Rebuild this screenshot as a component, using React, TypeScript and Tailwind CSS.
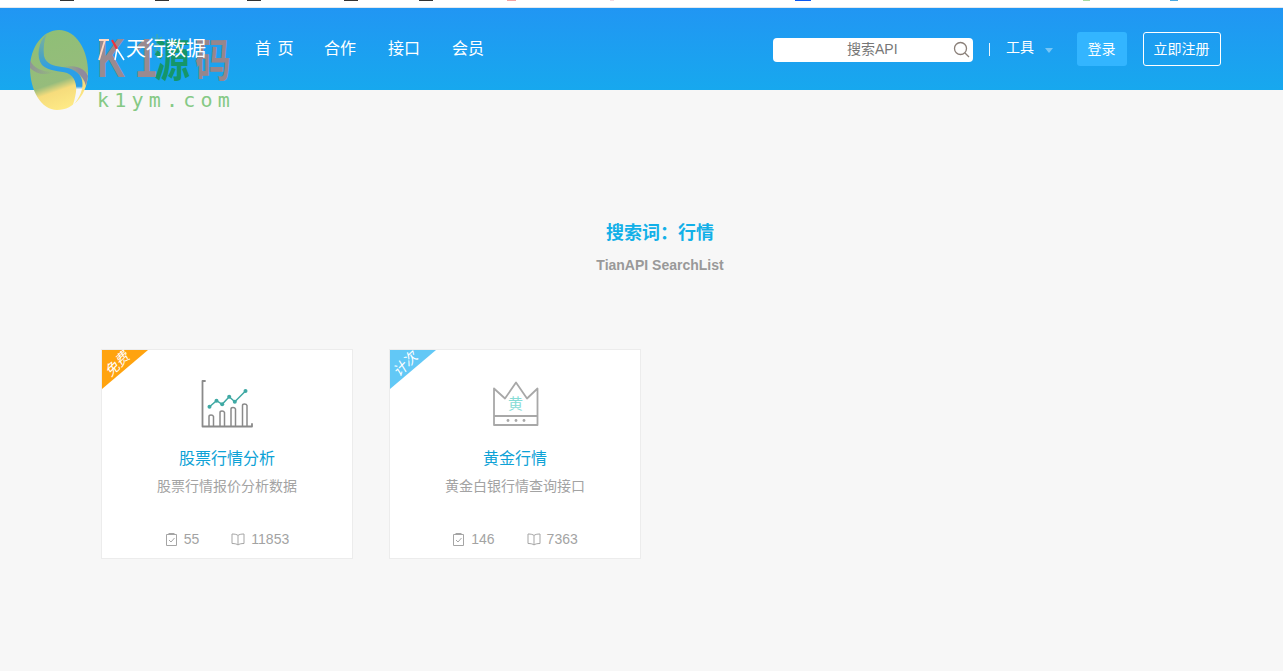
const marks = [
    { width: "w-[14px]", margin: "ml-[60px]", color: "bg-[#333]" },
    { width: "w-[14px]", margin: "ml-[81px]", color: "bg-[#333]" },
    { width: "w-[14px]", margin: "ml-[78px]", color: "bg-[#333]" },
    { width: "w-[14px]", margin: "ml-[83px]", color: "bg-[#333]" },
    { width: "w-[14px]", margin: "ml-[61px]", color: "bg-[#333]" },
    { width: "w-[9px]", margin: "ml-[74px]", color: "bg-[#f5a3a3]" },
    { width: "w-[4px]", margin: "ml-[94px]", color: "bg-[#f7d9e0]" },
    { width: "w-[16px]", margin: "ml-[181px]", color: "bg-[#0b57f0]" },
    { width: "w-[7px]", margin: "ml-[272px]", color: "bg-[#a9d9a0]" },
    { width: "w-[8px]", margin: "ml-[80px]", color: "bg-[#4aa8e0]" },
];

const cards = [
    {
        badge: "免费",
        badgeColor: "bg-[#ffa30f]",
        title: "股票行情分析",
        desc: "股票行情报价分析数据",
        icon: <ChartIcon />,
        calls: "55",
        views: "11853",
    },
    {
        badge: "计次",
        badgeColor: "bg-[#62c8f6]",
        title: "黄金行情",
        desc: "黄金白银行情查询接口",
        icon: <CrownIcon />,
        calls: "146",
        views: "7363",
    },
];

function ChartIcon() {
    return (
        <svg width="52" height="50" viewBox="0 0 52 50" fill="none">
            <path d="M4 2H1.500V47.500H51V45" stroke="#8a8a8a" strokeWidth="1.800" strokeLinecap="round" strokeLinejoin="round" />
            <path d="M8 47V37.500Q8 36 10 36T12.500 37.500V47M19 47V33.500Q19 32 21 32T23.500 33.500V47M30 47V30Q30 28.500 32 28.500T34.500 30V47M41.500 47V26.500Q41.500 25 43.500 25T46 26.500V47" stroke="#8a8a8a" strokeWidth="1.500" />
            <path d="M8.500 27.700L15.500 21.700L21.200 25.300L28.200 17.700L33.800 22.700L44.500 12" stroke="#3fa9a4" strokeWidth="1.500" />
            {[[8.5, 27.7], [15.5, 21.7], [21.2, 25.3], [28.2, 17.7], [33.8, 22.7], [44.5, 12]].map(([cx, cy]) => (
                <circle key={cx} cx={cx} cy={cy} r="2" fill="#3fa9a4" />
            ))}
        </svg>
    );
}

function CrownIcon() {
    return (
        <div className="relative ml-[1px] h-[46px] w-[46px]">
            <svg width="46" height="46" viewBox="0 0 46 46" fill="none">
                <path d="M1 7.500L12 17.500L23 1.500L34 17.500L44.500 7.500V44H1Z" stroke="#a8a8a8" strokeWidth="1.800" strokeLinejoin="round" />
                <path d="M1 35H44.500" stroke="#a8a8a8" strokeWidth="1.800" />
                <circle cx="15" cy="39.500" r="1.400" fill="#a8a8a8" />
                <circle cx="23" cy="39.500" r="1.400" fill="#a8a8a8" />
                <circle cx="31" cy="39.500" r="1.400" fill="#a8a8a8" />
            </svg>
            <span className="absolute left-0 right-0 top-[14px] text-center text-[15px] leading-[18px] text-[#86dcd6]">黄</span>
        </div>
    );
}

function CheckIcon() {
    return (
        <svg width="13" height="13" viewBox="0 0 13 13" fill="none" stroke="#a5a5a5" strokeWidth="1">
            <path d="M1.500 1.500H11.500V12.500H1.500Z" />
            <path d="M3.500 .5H9.500" />
            <path d="M4 7L6 9L9.500 5" />
        </svg>
    );
}

function BookIcon() {
    return (
        <svg width="14" height="13" viewBox="0 0 14 13" fill="none" stroke="#a5a5a5" strokeWidth="1">
            <path d="M7 2.500C6 1.500 4 1 1 1V10.500C4 10.500 6 11 7 12C8 11 10 10.500 13 10.500V1C10 1 8 1.500 7 2.500Z" />
            <path d="M7 2.500V12" />
        </svg>
    );
}

function Watermark() {
    return (
        <div className="pointer-events-none absolute left-[30px] top-[30px] flex gap-[7px]">
            <svg width="60" height="80" viewBox="0 0 60 80">
                <defs>
                    <linearGradient id="egg" x1="0.300" y1="0" x2="0.550" y2="1">
                        <stop offset="0" stopColor="#8fbf76" />
                        <stop offset="0.650" stopColor="#96bc7c" />
                        <stop offset="0.760" stopColor="#f6dc7c" />
                        <stop offset="1" stopColor="#feea86" />
                    </linearGradient>
                    <linearGradient id="sweep" x1="0" y1="0" x2="0" y2="1">
                        <stop offset="0" stopColor="#7fb39a" />
                        <stop offset="0.300" stopColor="#4fa4c0" />
                        <stop offset="0.500" stopColor="#2a9fe8" />
                        <stop offset="0.720" stopColor="#2a9fe8" />
                        <stop offset="0.760" stopColor="#f7f7f7" />
                        <stop offset="1" stopColor="#f7f7f7" />
                    </linearGradient>
                    <linearGradient id="bandLeft" x1="0" y1="0" x2="1" y2="0">
                        <stop offset="0" stopColor="#8f8a9e" stopOpacity="0.800" />
                        <stop offset="1" stopColor="#8f8a9e" stopOpacity="0" />
                    </linearGradient>
                    <linearGradient id="bandRight" x1="0" y1="0" x2="1" y2="0">
                        <stop offset="0" stopColor="#8f8a9e" stopOpacity="0" />
                        <stop offset="0.700" stopColor="#8f8a9e" />
                    </linearGradient>
                </defs>
                <path d="M29 0C46 0 58 20 58 42C58 64 44 80 27 80C11 80 0 60 0 38C0 17 13 0 29 0Z" fill="url(#egg)" />
                <path d="M0 30C3 38 12 42 24 42C16 46 6 44 0 38Z" fill="url(#bandLeft)" />
                <path d="M32 37C42 35 54 36 58 46C57 50 57 52 56 56C53 44 44 39 32 37Z" fill="url(#bandRight)" />
                <path d="M17 3C8 12 6 27 12 35C18 41 30 41 37 43C45 46 47 55 46 62C45 68 44 72 42 77C50 68 54 58 52 50C50 42 42 38 32 37C24 36 16 34 14 26C13 18 14 10 17 3Z" fill="url(#sweep)" />
            </svg>
            <div className="relative flex w-[136px] flex-col">
                <svg width="16" height="26" viewBox="0 0 16 26" fill="none" stroke="#58b96e" strokeWidth="1" opacity="0.700" className="absolute left-[52px] top-[3px]">
                    <path d="M8 1V25M8 8L3 4M8 8L13 4M8 14L2 10M8 14L14 10M8 20L4 16M8 20L12 16" />
                </svg>
                <div className="flex h-[56px] items-start whitespace-nowrap">
                    <span className="w-[38px] origin-left scale-x-[0.7] text-[56px] font-bold leading-[56px] text-[#9a8a90]">K</span>
                    <span className="w-[19px] origin-left scale-x-[0.7] text-[56px] font-bold leading-[56px] text-[#9a8a90]">1</span>
                    <span className="mt-[4px] w-[41px] scale-y-[1.25] text-[36px] font-bold leading-[56px] text-[#15966a]">源</span>
                    <span className="mt-[4px] scale-y-[1.25] text-[36px] font-bold leading-[56px] text-[#96868c]">码</span>
                </div>
                <span className="mt-[5px] whitespace-nowrap font-['DejaVu_Sans_Mono',monospace] text-[20px] leading-[18px] tracking-[5.200px] text-[#85c985]">k1ym.com</span>
            </div>
        </div>
    );
}

export default function App() {
    return (
        <div className="relative min-h-[671px] overflow-hidden bg-[#f7f7f7] font-['Liberation_Sans','Noto_Sans_CJK_SC',sans-serif]">
            <div className="flex h-[8px] items-start border-b border-[#e3e8ee] bg-white">
                {marks.map((mark) => (
                    <div key={mark.margin + mark.width} className={`h-[1px] ${mark.width} ${mark.margin} ${mark.color}`} />
                ))}
            </div>

            <header className="flex h-[82px] items-center bg-gradient-to-b from-[#2196f3] to-[#17a8ee] pl-[97px] pr-[62px] text-white">
                <svg width="28" height="24" viewBox="0 0 28 24" fill="none" className="relative z-10">
                    <path d="M2 3H12M8 3L2 23" stroke="#ffd9c4" strokeWidth="1.800" />
                    <path d="M15 3L20 12" stroke="#f0343c" strokeWidth="2.200" />
                    <path d="M20 12L27 23M20 12L18 23" stroke="#fff" strokeWidth="1.500" />
                </svg>
                <span className="relative z-10 ml-[1px] text-[20px] leading-none">天行数据</span>
                <nav className="ml-[49px] flex gap-[32px] text-[16px]">
                    <span className="w-[37px] whitespace-nowrap tracking-[1px]">首 页</span>
                    <span>合作</span>
                    <span>接口</span>
                    <span>会员</span>
                </nav>
                <div className="ml-auto mt-[2px] flex h-[24px] w-[200px] items-center rounded-[4px] bg-white pl-[74px] pr-[3px] text-[14px] text-[#777]">
                    <span className="mb-[2px]">搜索API</span>
                    <svg width="17" height="17" viewBox="0 0 17 17" fill="none" stroke="#8a7f78" strokeWidth="1.300" className="mb-[1px] ml-auto">
                        <circle cx="7.500" cy="7.500" r="6" />
                        <path d="M12 12L16 16" />
                    </svg>
                </div>
                <div className="ml-[16px] h-[13px] w-[1px] bg-white/90" />
                <span className="mb-[3px] ml-[16px] text-[14px]">工具</span>
                <div className="ml-[11px] mt-[2px] h-0 w-0 border-x-[4px] border-t-[5px] border-x-transparent border-t-white/40" />
                <button className="ml-[24px] h-[34px] w-[50px] rounded-[3px] bg-[#33b5ff] pr-[1px] text-[14px]">登录</button>
                <button className="ml-[16px] h-[34px] w-[78px] rounded-[3px] border border-white pr-[1px] text-[14px]">立即注册</button>
            </header>

            <div className="mt-[130px] flex flex-col items-center pl-[37px]">
                <h1 className="text-[18px] font-bold leading-[26px] text-[#12b0e8]">搜索词：行情</h1>
                <p className="mt-[10px] text-[14px] font-bold leading-[18px] text-[#999]">TianAPI SearchList</p>
            </div>

            <div className="mt-[75px] flex gap-[36px] pl-[101px]">
                {cards.map((card) => (
                    <article key={card.title} className="relative flex h-[210px] w-[252px] flex-col items-center border border-[#ececec] bg-white pt-[29px]">
                        <div className={`absolute left-0 top-0 h-[39px] w-[46px] [clip-path:polygon(0_0,100%_0,0_100%)] ${card.badgeColor}`} />
                        <span className="absolute left-[0px] top-[6px] w-[30px] -rotate-45 text-center text-[14px] italic leading-[16px] text-white">{card.badge}</span>
                        <div className="flex h-[50px] items-center">{card.icon}</div>
                        <h2 className="mt-[18px] text-[16px] leading-[24px] text-[#0ea2d6]">{card.title}</h2>
                        <p className="mt-[3px] text-[14px] leading-[24px] text-[#a3a3a3]">{card.desc}</p>
                        <div className="mt-[31px] flex items-center gap-[32px] text-[14px] leading-[20px] text-[#a3a3a3]">
                            <span className="flex items-center gap-[6px]"><CheckIcon />{card.calls}</span>
                            <span className="flex items-center gap-[6px]"><BookIcon />{card.views}</span>
                        </div>
                    </article>
                ))}
            </div>

            <Watermark />
        </div>
    );
}
